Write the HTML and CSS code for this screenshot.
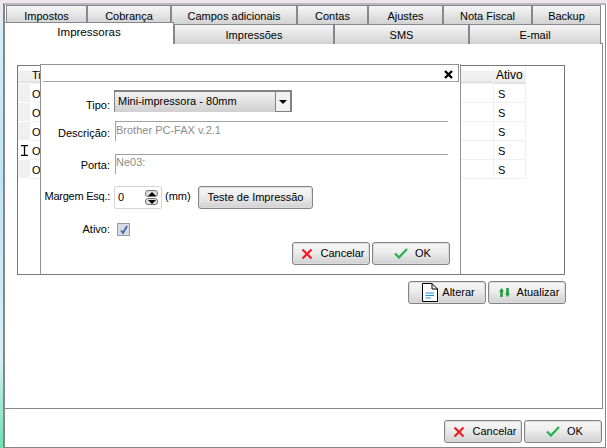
FILE: index.html
```html
<!DOCTYPE html>
<html lang="pt">
<head>
<meta charset="utf-8">
<title>Impressoras</title>
<link rel="stylesheet" href="styles.css">
</head>
<body>
<svg class="defs" width="0" height="0" aria-hidden="true">
  <symbol id="x-red" viewBox="0 0 12 12"><path d="M1.5 1.5 10.5 10.5M10.5 1.5 1.5 10.5" stroke="#ee1c25" stroke-width="2.2" fill="none"/></symbol>
  <symbol id="check-green" viewBox="0 0 14 11"><path d="M1 5.5 5 9.5 13 1" stroke="#22b14c" stroke-width="2.2" fill="none"/></symbol>
</svg>
<div class="frame">
  <div class="tabs tabs-back">
    <div class="tab">Impostos</div>
    <div class="tab">Cobrança</div>
    <div class="tab">Campos adicionais</div>
    <div class="tab">Contas</div>
    <div class="tab">Ajustes</div>
    <div class="tab">Nota Fiscal</div>
    <div class="tab">Backup</div>
  </div>
  <div class="tabs tabs-front">
    <div class="tab tab-active">Impressoras</div>
    <div class="tab">Impressões</div>
    <div class="tab">SMS</div>
    <div class="tab">E-mail</div>
  </div>
  <div class="panel">
    <div class="grid-wrap">
      <div class="grid">
        <div class="grid-row grid-head">
          <div class="c-ind"></div><div class="c-main">Tipo</div><div class="c-ativo">Ativo</div>
        </div>
        <div class="grid-row"><div class="c-ind"></div><div class="c-main">O</div><div class="c-ativo">S</div></div>
        <div class="grid-row"><div class="c-ind"></div><div class="c-main">O</div><div class="c-ativo">S</div></div>
        <div class="grid-row"><div class="c-ind"></div><div class="c-main">O</div><div class="c-ativo">S</div></div>
        <div class="grid-row"><div class="c-ind c-cursor">
          <svg width="7" height="11" viewBox="0 0 7 11"><path d="M0 .5H7M0 10.5H7M3.5 0V11" stroke="#000" stroke-width="1.3" fill="none"/></svg>
        </div><div class="c-main">O</div><div class="c-ativo">S</div></div>
        <div class="grid-row"><div class="c-ind"></div><div class="c-main">O</div><div class="c-ativo">S</div></div>
      </div>
      <div class="dialog">
        <div class="dlg-title">
          <svg class="dlg-close" width="9" height="9" viewBox="0 0 9 9"><path d="M1 1 8 8M8 1 1 8" stroke="#000" stroke-width="2.4" fill="none"/></svg>
        </div>
        <div class="dlg-body">
          <div class="form-row row-tipo">
            <label class="lbl">Tipo:</label>
            <div class="combo"><span class="combo-text">Mini-impressora - 80mm</span><span class="combo-btn"><i class="arrow"></i></span></div>
          </div>
          <div class="form-row row-desc">
            <label class="lbl">Descrição:</label>
            <div class="memo">Brother PC-FAX v.2.1</div>
          </div>
          <div class="form-row row-porta">
            <label class="lbl">Porta:</label>
            <div class="memo">Ne03:</div>
          </div>
          <div class="form-row row-margem">
            <label class="lbl">Margem Esq.:</label>
            <div class="spin"><span class="spin-val">0</span>
              <span class="spin-btns"><span class="spin-btn"><i class="up"></i></span><span class="spin-btn"><i class="down"></i></span></span>
            </div>
            <span class="unit">(mm)</span>
            <button class="btn btn-test">Teste de Impressão</button>
          </div>
          <div class="form-row row-ativo">
            <label class="lbl">Ativo:</label>
            <span class="check"><svg width="10" height="10" viewBox="0 0 10 10"><path d="M2 5.5 4 8 8 1" stroke="#3f66b8" stroke-width="1.8" fill="none"/></svg></span>
          </div>
          <div class="dlg-actions">
            <button class="btn btn-act"><svg class="ico-x" width="12" height="12"><use href="#x-red"/></svg><span>Cancelar</span></button>
            <button class="btn btn-act"><svg class="ico-c" width="14" height="11"><use href="#check-green"/></svg><span class="ok">OK</span></button>
          </div>
        </div>
      </div>
    </div>
    <div class="panel-actions">
      <button class="btn btn-act">
        <svg class="ico-doc" width="16" height="19" viewBox="0 0 16 19"><path d="M.5.5H10L15.500 6V18.500H.5Z M10 .5V6H15.500" fill="#fff" stroke="#000"/><path d="M3.500 10H12M3.500 12.500H12M3.500 15H9" stroke="#1f8fd6" fill="none"/></svg><span>Alterar</span></button>
      <button class="btn btn-act">
        <svg class="ico-ref" width="11" height="9" viewBox="0 0 11 9"><path d="M2.500 0 5 3.500H3.800V9H1.200V3.500H0Z M8.500 9 6 5.500H7.200V0H9.800V5.500H11Z" fill="#1f9d3a"/></svg><span>Atualizar</span></button>
    </div>
  </div>
  <div class="footer">
    <button class="btn btn-act"><svg class="ico-x" width="12" height="12"><use href="#x-red"/></svg><span>Cancelar</span></button>
    <button class="btn btn-act"><svg class="ico-c" width="14" height="11"><use href="#check-green"/></svg><span class="ok">OK</span></button>
  </div>
</div>
</body>
</html>
```
FILE: styles.css
```css
* { box-sizing: border-box; }
html, body { margin: 0; height: 100%; }
body {
  width: 607px; height: 448px; overflow: hidden;
  padding: 3px 1px 0 3px;
  font: 11px/13px "Liberation Sans", Arial, sans-serif;
  color: #000;
  background:
    linear-gradient(180deg, #efe3ec 0 3px, transparent 3px),
    linear-gradient(90deg, transparent 0 4px, #fff 4px),
    linear-gradient(180deg, #f3e6ee 0, #cfeef8 8%, #bfe4f5 40%, #d6f0f6 80%, #6fe0b0 100%);
}
.defs { position: absolute; }
.frame {
  width: 603px; height: 445px;
  border: solid #85858a; border-width: 2px 1px 1px 2px;
  border-top-color: #b8b8bc;
  background: #fff;
  display: flex; flex-direction: column;
}
.tabs { display: grid; height: 19px; }
.tabs-back {
  margin-left: 1px; width: 595px;
  grid-template-columns: 81px 84px 126px 71px 75px 89px 69px;
}
.tabs-front {
  margin-left: -1px; width: 597px; position: relative; z-index: 2;
  grid-template-columns: 170px 160px 135px 132px;
}
.tab {
  display: flex; align-items: center; justify-content: center;
  border: 1px solid #87878c; border-bottom-width: 0;
  background: linear-gradient(180deg, #f6f6f6 0, #e6e6e6 45%, #d2d2d2 100%);
  padding-top: 2px;
}
.tabs-front .tab { padding-top: 1px; }
.tabs-front .tab-active {
  height: 22px; margin-top: -2px;
  background: #fff; border-bottom: 0;
  font-size: 11.5px;
  align-items: flex-start; padding-top: 3px;
}
.panel {
  width: 599px; height: 366px; margin-left: -1px;
  border: 1px solid #87878c;
  background: #fff;
  padding: 21px 0 0 12px;
  display: flex; flex-direction: column;
}
.grid-wrap { position: relative; width: 548px; height: 210px; }
.grid { height: 100%; border: 1px solid #77777c; background: #fff; }
.grid-row { display: flex; height: 19px; }
.grid-head { height: 18px; }
.grid-head > div { background: linear-gradient(180deg, #fff 0, #fff 25%, #f0f0f0 30%, #eeeeee 85%, #dadada 100%); }
.c-ind { width: 12px; background: #f0f0f0; border-bottom: 1px solid #fff; display: flex; align-items: center; justify-content: center; }
.c-main { width: 464px; padding: 4px 0 0 2px; border: solid #f0f0f0; border-width: 0 1px 1px 0; }
.c-ativo { width: 32px; padding: 4px 0 0 4px; border: solid #f0f0f0; border-width: 0 1px 1px 0; }
.grid-head .c-main { padding-top: 3px; }
.grid-head .c-ativo { font-size: 12px; padding: 3px 0 0 2px; border-bottom: 0; }
.c-cursor { background: #fff; }

.dialog {
  position: absolute; left: 23px; top: -1px; width: 421px; height: 211px;
  background: #fff;
  border-left: 1px solid #909095; border-right: 1px solid #909095;
  border-bottom: 1px solid #77777c;
  display: flex; flex-direction: column;
}
.dlg-title {
  height: 18px; margin-right: 1px;
  border-top: 1px solid #909095; border-right: 1px solid #909095;
  display: flex; justify-content: flex-end; align-items: center;
  position: relative;
}
.dlg-title::after {
  content: ""; position: absolute; left: 2px; right: 0; bottom: 0; height: 1px; background: #a0a0a0;
}
.dlg-close { margin-right: 5px; margin-top: 1px; }
.dlg-body { flex: 1; padding: 8px 10px 0 0; display: flex; flex-direction: column; }
.form-row { display: flex; align-items: flex-start; }
.lbl { width: 69px; text-align: right; margin-right: 4px; flex: none; }
.row-tipo { height: 31px; }
.row-tipo .lbl { padding-top: 9px; }
.combo {
  width: 178px; height: 22px; display: flex;
  border: solid #808085; border-width: 2px 1px 0 1px;
  background: linear-gradient(180deg, #f2f2f2, #cfcfcf);
}
.combo-text { flex: 1; padding: 3px 0 0 3px; }
.combo-btn { width: 16px; background: #f1f1f1; border: solid #808085; border-width: 0 1px 1px 1px; display: flex; align-items: center; justify-content: center; }
.arrow { width: 0; height: 0; border: 4px solid transparent; border-top: 4px solid #000; border-bottom: 0; }
.row-desc { height: 33px; }
.row-desc .lbl { padding-top: 6px; }
.row-desc .memo { padding-top: 2px; }
.row-porta { height: 32px; }
.row-porta .lbl { padding-top: 5px; }
.memo {
  width: 333px; height: 20px; margin-left: 1px;
  border-left: 1px solid #a0a0a0; border-top: 1px solid #a0a0a0;
  color: #8c8c8c; padding: 1px 0 0 0;
}
.row-margem { height: 37px; }
.row-margem .lbl { padding-top: 4px; letter-spacing: -.25px; }
.spin {
  width: 48px; height: 23px; border: 1px solid #d5d5d8; border-radius: 2px;
  display: flex; justify-content: space-between; align-items: center; padding: 0 3px 0 3px;
}
.spin-btns { display: flex; flex-direction: column; gap: 1px; }
.spin-btn {
  width: 13px; height: 7px; border: 1px solid #777; border-radius: 3px;
  background: #dedede; display: flex; align-items: center; justify-content: center;
}
.up { width: 0; height: 0; border: 4px solid transparent; border-bottom: 4px solid #000; border-top: 0; }
.down { width: 0; height: 0; border: 4px solid transparent; border-top: 4px solid #000; border-bottom: 0; }
.unit { margin-left: 3px; padding-top: 4px; width: 33px; flex: none; }
.btn {
  font: 11px/13px "Liberation Sans", Arial, sans-serif; color: #000;
  border: 1px solid #828287; border-radius: 3px; padding: 0;
  box-shadow: inset 0 0 0 1px #dcdcdc;
  background: linear-gradient(180deg, #f7f7f7 0, #ececec 45%, #d0d0d0 100%);
  display: flex; align-items: center; justify-content: center;
}
.btn-test { width: 115px; height: 23px; }
.row-ativo { height: 19px; }
.check {
  width: 13px; height: 13px; margin-left: 3px;
  background: #d6dbe4; border: 1px solid #9a9aa2;
  display: flex; align-items: center; justify-content: center;
}
.dlg-actions { display: flex; justify-content: flex-end; gap: 2px; }
.btn-act { width: 78px; height: 23px; flex: none; }
.ico-x { margin-right: 7px; margin-left: 4px; }
.ico-c { margin-right: 7px; margin-left: 11px; }
.ok { margin-right: 8px; }
.ico-doc { margin-right: 4px; flex: none; margin-left: 3px; }
.ico-ref { margin-right: 7px; margin-left: 4px; flex: none; }
.panel-actions { display: flex; justify-content: flex-end; gap: 2px; margin-top: 6px; width: 549px; }
.footer { flex: 1; display: flex; justify-content: flex-end; gap: 2px; padding: 11px 3px 0 0; }
```
